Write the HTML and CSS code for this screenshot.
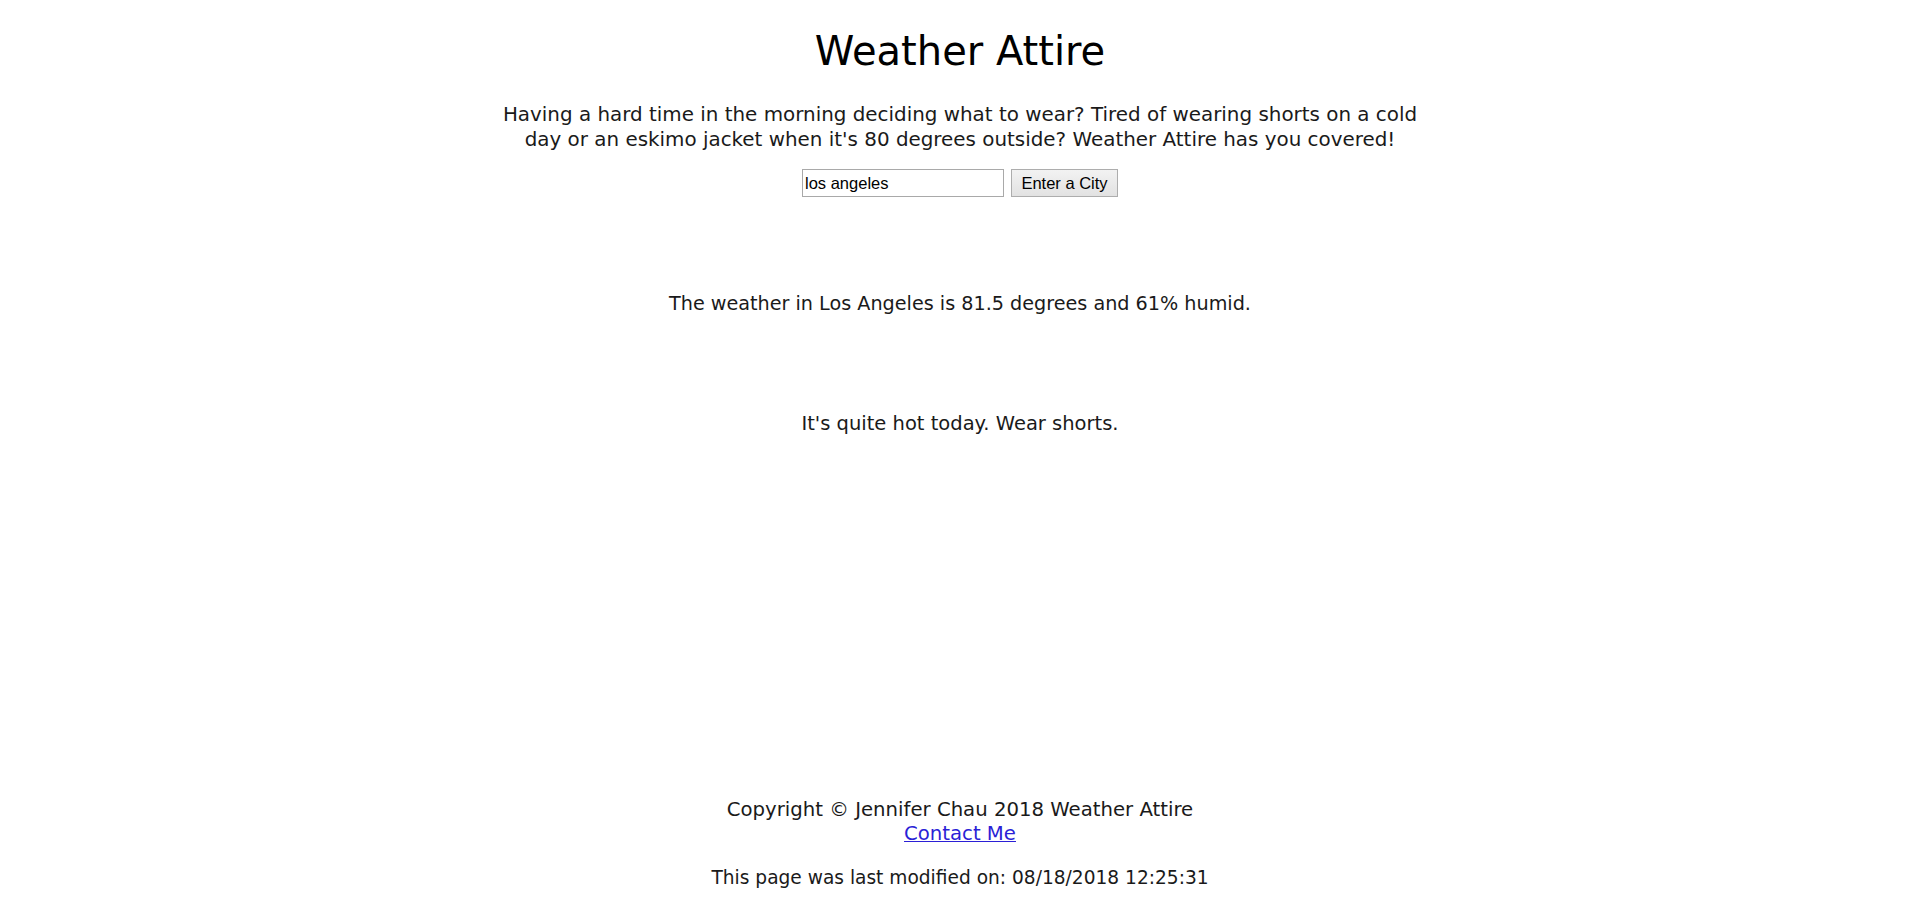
FILE: index.html
```html
<!DOCTYPE html>
<html lang="en">
<head>
<meta charset="utf-8">
<title>Weather Attire</title>
<link rel="stylesheet" href="styles.css">
</head>
<body>
<div class="page">
  <header class="intro">
    <h1 class="title">Weather Attire</h1>
    <p class="lead">Having a hard time in the morning deciding what to wear? Tired of wearing shorts on a cold day or an eskimo jacket when it's 80 degrees outside? Weather Attire has you covered!</p>
    <form class="search">
      <input class="city-input" type="text" value="los angeles">
      <button class="city-button" type="button">Enter a City</button>
    </form>
  </header>
  <main class="results">
    <p class="weather">The weather in Los Angeles is 81.5 degrees and 61% humid.</p>
    <p class="advice">It's quite hot today. Wear shorts.</p>
  </main>
  <footer class="footer">
    <p class="copy">Copyright &copy; Jennifer Chau 2018 Weather Attire<br><a class="contact" href="#">Contact Me</a></p>
    <p class="modified">This page was last modified on: 08/18/2018 12:25:31</p>
  </footer>
</div>
</body>
</html>
```
FILE: styles.css
```css
html, body {
  margin: 0;
  padding: 0;
  background: #ffffff;
}

body {
  font-family: "DejaVu Sans", "Open Sans", sans-serif;
  font-size: 19.5px;
  line-height: 24px;
  color: #1a1a1a;
}

.page {
  min-height: 100vh;
  display: flex;
  flex-direction: column;
  align-items: center;
  text-align: center;
  box-sizing: border-box;
}

.intro {
  display: flex;
  flex-direction: column;
  align-items: center;
}

.title {
  margin: 27px 0 0;
  font-size: 40px;
  line-height: 48px;
  font-weight: normal;
  color: #000000;
}

.lead {
  width: 940px;
  margin: 28px 0 0;
  font-size: 19.9px;
  line-height: 24.5px;
}

.search {
  display: flex;
  gap: 7px;
  margin: 17px 0 0;
}

.city-input {
  width: 202px;
  height: 28px;
  box-sizing: border-box;
  margin: 0;
  padding: 0 2px;
  border: 1px solid #a9a9a9;
  font-family: "Liberation Sans", Arial, sans-serif;
  font-size: 16.5px;
  color: #000000;
  background: #ffffff;
}

.city-button {
  width: 107px;
  height: 28px;
  box-sizing: border-box;
  margin: 0;
  padding: 0 6px;
  border: 1px solid #adadad;
  border-radius: 0;
  background: linear-gradient(#f2f2f2, #e2e2e2);
  font-family: "Liberation Sans", Arial, sans-serif;
  font-size: 16.5px;
  color: #000000;
}

.results {
  display: flex;
  flex-direction: column;
  align-items: center;
}

.weather {
  margin: 95px 0 0;
  font-size: 19.2px;
}

.advice {
  margin: 96px 0 0;
}

.footer {
  margin-top: auto;
  padding-bottom: 17px;
}

.footer p {
  margin: 20px 0 0;
}

.footer .copy {
  margin-top: 0;
  font-size: 19.7px;
}

.footer .modified {
  font-size: 18.6px;
}

.contact {
  color: #2b1fd6;
  text-decoration: underline;
}
```
